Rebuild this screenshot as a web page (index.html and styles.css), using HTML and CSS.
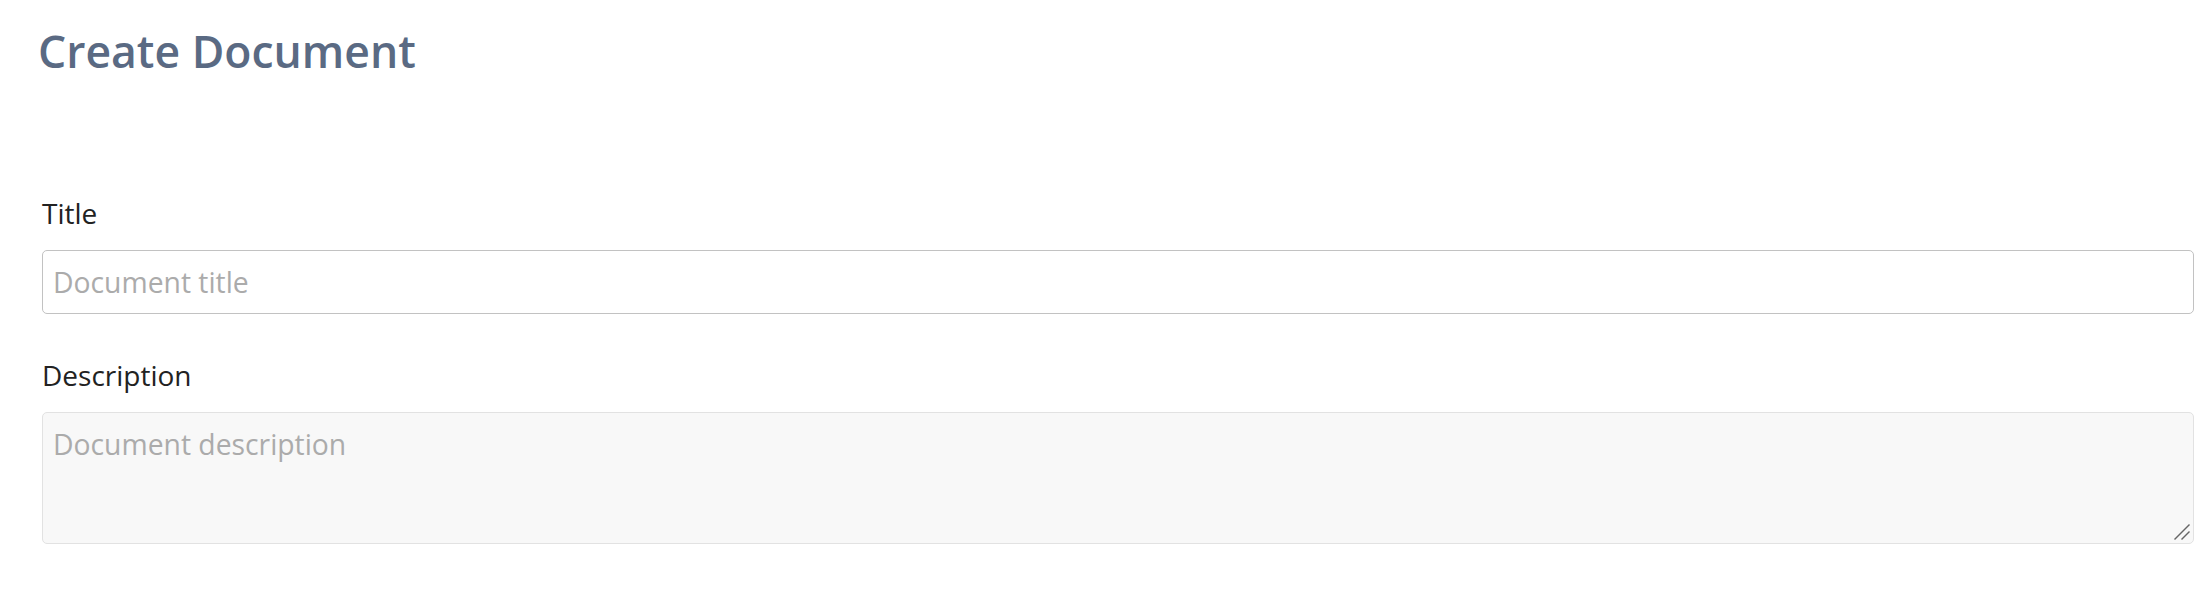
FILE: index.html
```html
<!DOCTYPE html>
<html lang="en">
<head>
<meta charset="utf-8">
<title>Create Document</title>
<link rel="stylesheet" href="styles.css">
</head>
<body>
<main class="page">
  <h1 class="page-title">Create Document</h1>
  <form class="doc-form">
    <div class="field">
      <label class="field-label" for="title">Title</label>
      <input class="text-input" id="title" type="text" placeholder="Document title">
    </div>
    <div class="field">
      <label class="field-label" for="desc">Description</label>
      <div class="textarea-wrap">
        <textarea class="text-area" id="desc" placeholder="Document description"></textarea>
        <svg class="resize-grip" width="20" height="20" viewBox="0 0 20 20" aria-hidden="true">
          <line x1="1.5" y1="16.5" x2="16.5" y2="1.5" />
          <line x1="8.5" y1="16.5" x2="16.5" y2="8.5" />
        </svg>
      </div>
    </div>
  </form>
</main>
</body>
</html>
```

FILE: styles.css
```css
html, body {
  margin: 0;
  padding: 0;
  background: #ffffff;
}

body {
  font-family: "Open Sans", "Noto Sans", sans-serif;
  color: #222222;
}

.page {
  padding: 24px 16px 40px 42px;
}

.page-title {
  margin: 0 0 0 -4px;
  font-size: 44.5px;
  font-weight: 600;
  line-height: 54px;
  color: #5a6a83;
}

.doc-form {
  display: flex;
  flex-direction: column;
  gap: 40px;
  margin-top: 114px;
}

.field {
  display: flex;
  flex-direction: column;
  gap: 16px;
}

.field-label {
  font-size: 28px;
  line-height: 42px;
  color: #222222;
}

.text-input,
.text-area {
  box-sizing: border-box;
  width: 100%;
  margin: 0;
  font-family: "Open Sans", "Noto Sans", sans-serif;
  font-size: 28.3px;
  line-height: 42px;
  color: #222222;
  border-radius: 5px;
  outline: none;
}

.text-input {
  height: 64px;
  padding: 0 10px;
  border: 1px solid #c2c2c2;
  background: #ffffff;
}

.textarea-wrap {
  position: relative;
}

.text-area {
  display: block;
  height: 132px;
  padding: 10px 10px 8px;
  border: 1px solid #e2e2e2;
  background: #f8f8f8;
  resize: none;
}

.resize-grip {
  position: absolute;
  right: 1px;
  bottom: 1px;
  stroke: #666666;
  stroke-width: 1.5;
  pointer-events: none;
}

.text-input::placeholder,
.text-area::placeholder {
  color: #ababab;
  opacity: 1;
}
```
